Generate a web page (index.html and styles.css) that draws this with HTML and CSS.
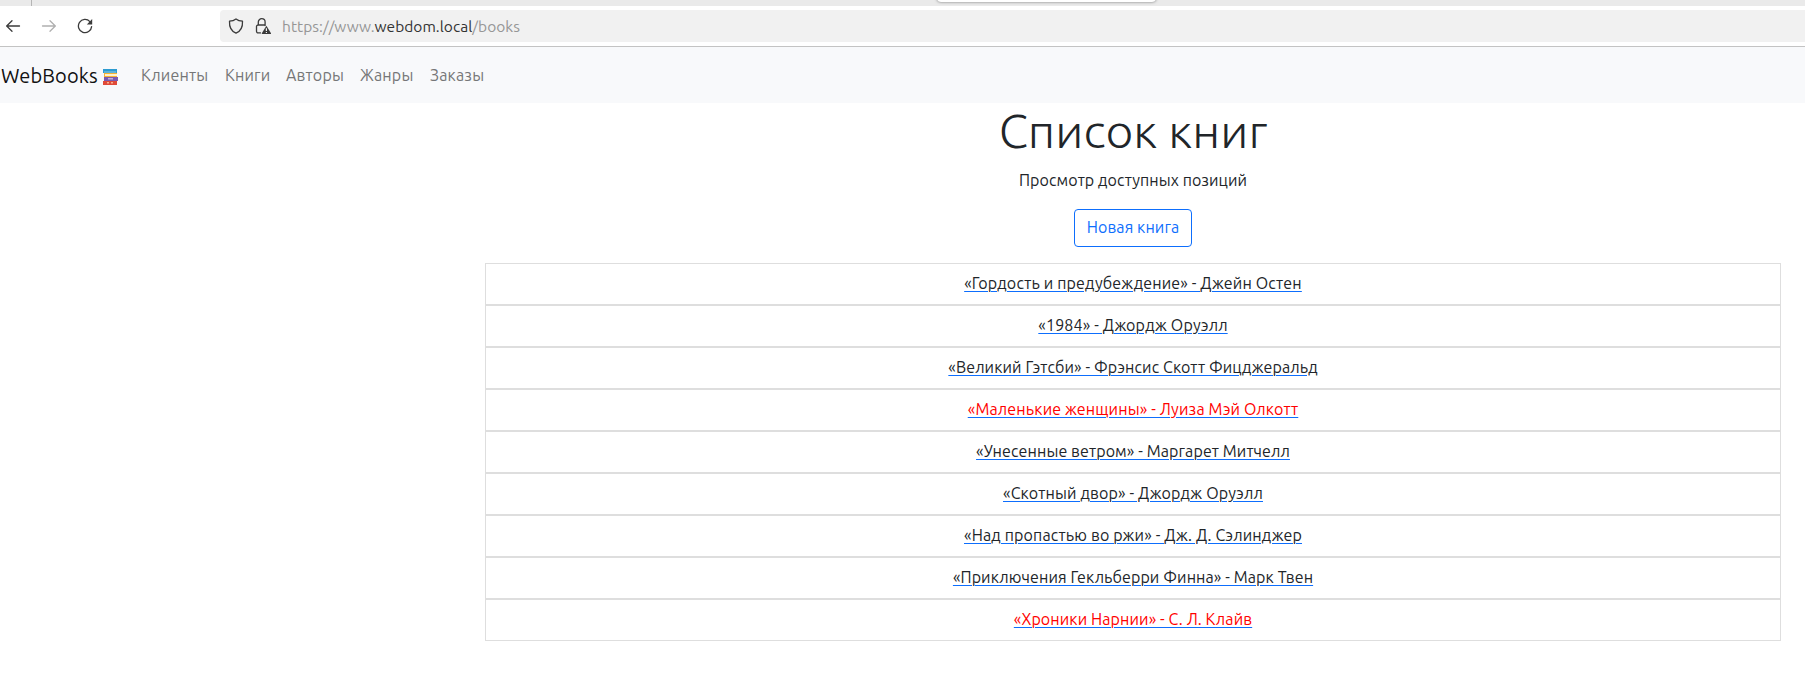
FILE: index.html
```html
<!DOCTYPE html>
<html lang="ru">
<head>
<meta charset="utf-8">
<title>Список книг</title>
<link rel="stylesheet" href="styles.css">
</head>
<body>
<div class="tabstrip"><span class="tab-divider"></span><span class="tab-popup"></span></div>
<div class="toolbar">
  <div class="controls">
    <svg class="ico" viewBox="0 0 16 16"><path d="M14.500 8H1.600M7 2.700 1.700 8 7 13.300"/></svg>
    <svg class="ico ico-disabled" viewBox="0 0 16 16"><path d="M1.500 8h12.900M9 2.700 14.300 8 9 13.300"/></svg>
    <svg class="ico" viewBox="0 0 16 16"><path d="M12.900 3.600A6.600 6.600 0 1 0 14.600 8.600"/><path class="solid" d="M15.200 1v5.400H9.800z"/></svg>
  </div>
  <div class="urlbar">
    <svg class="ico" viewBox="0 0 16 16"><path d="M8 .9c2 1.500 4.200 2.100 6.500 2.300.3 5.300-1.500 9.800-6.500 12C3 13 1.200 8.500 1.500 3.200 3.800 3 6 2.400 8 .9z"/></svg>
    <svg class="ico ico-lock" viewBox="0 0 16 16"><path d="M5.500 14.900H3.100A1.600 1.600 0 0 1 1.500 13.300V8.600A1.600 1.600 0 0 1 3.100 7h6.800M3.300 7V4.100a3.400 3.400 0 0 1 6.800 0V7.500"/><path class="solid" d="M11.400 7.800 16 15.200a.6.6 0 0 1-.5.800H7.300a.6.6 0 0 1-.5-.8z"/><path class="mark" d="M11.400 10.300v2.700M11.400 13.900v1.100"/></svg>
    <div class="url">https://www.<span class="url-host">webdom.local</span>/books</div>
  </div>
</div>
<nav class="navbar">
  <a class="brand" href="#">WebBooks</a>
  <svg class="books" viewBox="0 0 15 16">
    <path fill="#2d9bd0" d="M0 0h14v4H0z"/><path fill="#8fcbe4" d="M1 2.500h12v1H1z"/>
    <path fill="#f5b335" d="M1 4h13v4H1z"/><path fill="#fff2c9" d="M2 5h12v2H2z"/>
    <path fill="#7a5bb0" d="M1 8h14v4H1z"/><path fill="#bdb0dc" d="M5 9h5v1.500H5z"/>
    <path fill="#e04a38" d="M0 12h14v4H0z"/><path fill="#f6b08c" d="M4 13h2v1.500H4zM8 13h2v1.500H8z"/>
  </svg>
  <div class="links">
    <a class="link-clients" href="#">Клиенты</a>
    <a class="link-books" href="#">Книги</a>
    <a class="link-authors" href="#">Авторы</a>
    <a class="link-genres" href="#">Жанры</a>
    <a class="link-orders" href="#">Заказы</a>
  </div>
</nav>
<main class="content">
  <h1>Список книг</h1>
  <p class="lead">Просмотр доступных позиций</p>
  <a class="btn" href="#">Новая книга</a>
  <div class="list">
    <div class="row"><a href="#"><span>«Гордость и предубеждение» - Джейн Остен</span></a></div>
    <div class="row"><a href="#"><span>«1984» - Джордж Оруэлл</span></a></div>
    <div class="row snug"><a href="#"><span>«Великий Гэтсби» - Фрэнсис Скотт Фицджеральд</span></a></div>
    <div class="row taken"><a href="#"><span>«Маленькие женщины» - Луиза Мэй Олкотт</span></a></div>
    <div class="row snug"><a href="#"><span>«Унесенные ветром» - Маргарет Митчелл</span></a></div>
    <div class="row"><a href="#"><span>«Скотный двор» - Джордж Оруэлл</span></a></div>
    <div class="row"><a href="#"><span>«Над пропастью во ржи» - Дж. Д. Сэлинджер</span></a></div>
    <div class="row snug"><a href="#"><span>«Приключения Гекльберри Финна» - Марк Твен</span></a></div>
    <div class="row taken snug"><a href="#"><span>«Хроники Нарнии» - С. Л. Клайв</span></a></div>
  </div>
</main>
</body>
</html>
```
FILE: styles.css
```css
* { box-sizing: border-box; }
body { margin: 0; background: #fff; color: #212529; font: 16px/24px "Ubuntu", "Noto Sans", sans-serif; overflow: hidden; }
a { text-decoration: none; }

/* Browser chrome */
.tabstrip { position: relative; height: 6px; background: #eaeaea; overflow: hidden; }
.tab-divider { position: absolute; left: 31px; top: 0; width: 1px; height: 6px; background: #b5b5b5; }
.tab-popup { position: absolute; left: 937px; top: -10px; width: 219px; height: 12px; border-radius: 4px; background: #fff; box-shadow: 0 0 3px rgba(0, 0, 0, .5); }
.toolbar { display: flex; height: 41px; padding: 4px 0; border-bottom: 1px solid #c3c3c3; }
.controls { display: flex; align-items: center; gap: 20px; width: 220px; padding-left: 5px; }
.ico { width: 16px; height: 16px; flex: none; fill: none; stroke: #3b3b3b; stroke-width: 1.3; stroke-linecap: round; stroke-linejoin: round; }
.ico-disabled { stroke: #b0b0b0; }
.ico .solid { fill: #3b3b3b; stroke: none; }
.ico .mark { stroke: #f1f1f1; stroke-width: 1.2; stroke-linecap: butt; }
.urlbar { display: flex; flex: 1; align-items: center; height: 32px; padding-left: 8px; border-radius: 4px 0 0 4px; background: #f1f1f1; }
.ico-lock { margin-left: 11px; }
.url { margin-left: 11px; padding-top: 1px; font-size: 15.5px; letter-spacing: .04px; color: #969696; white-space: nowrap; }
.url-host { color: #333; }

/* Site navigation */
.navbar { display: flex; align-items: center; height: 56px; background: #f8f9fb; }
.brand { width: 97px; padding: 1px 0 0 1px; font-size: 20px; line-height: 30px; letter-spacing: .12px; color: #111; white-space: nowrap; }
.books { width: 15px; height: 16px; margin: 4px 0 0 6px; }
.links { display: flex; gap: 16px; margin-left: 23px; }
.links a { color: #757677; letter-spacing: .17px; white-space: nowrap; }
.link-clients { width: 68px; }
.link-books { width: 45px; }
.link-authors { width: 58px; }
.link-genres { width: 54px; }
.link-orders { width: 55px; }

/* Book list */
.content { margin-left: 485px; width: 1296px; text-align: center; }
h1 { margin: -1px 0 8px; font-size: 48px; line-height: 57.6px; font-weight: 300; }
.lead { margin: 0 0 17px; letter-spacing: .09px; }
.btn { display: block; width: 118px; height: 38px; margin: 0 auto 16px; border: 1px solid #0d6efd; border-radius: 4px; line-height: 34px; letter-spacing: .08px; color: #0d6efd; white-space: nowrap; }
.content { display: flow-root; margin-top: 0; }
.row { height: 42px; padding: 7px 8px 9px; border: 1px solid #dedede; letter-spacing: .155px; }
.snug { letter-spacing: .105px; }
.row a { color: #0d6efd; text-decoration: underline 1px; text-underline-offset: 2px; }
.row span { color: #212529; }
.row.taken span { color: #f00; }
```
